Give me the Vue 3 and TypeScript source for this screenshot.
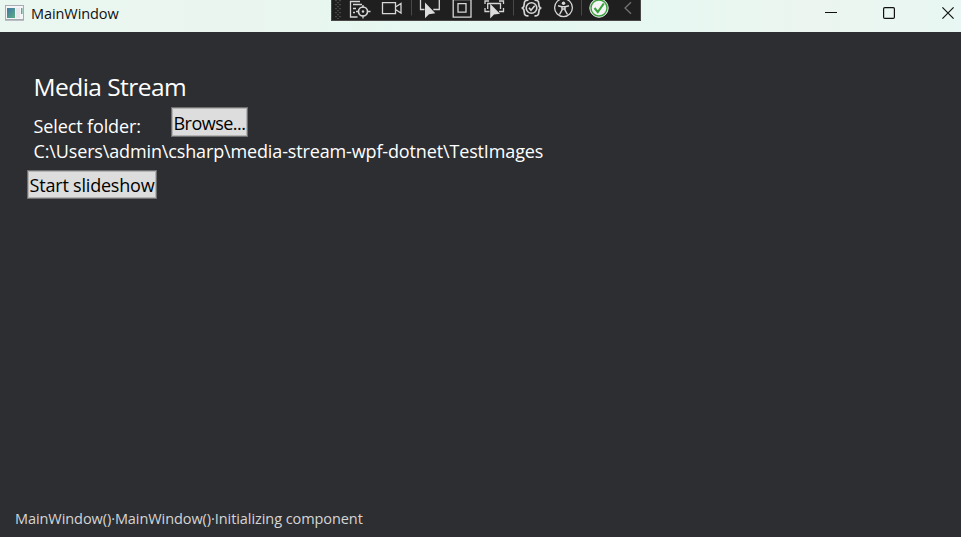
<script setup lang="ts">
import { ref } from 'vue'

const folder = ref<string>('C:\\Users\\admin\\csharp\\media-stream-wpf-dotnet\\TestImages')
const status = ref<string>('MainWindow()·MainWindow()·Initializing component')
</script>

<template>
  <div class="window">
    <header class="titlebar">
      <svg class="app-icon" width="19" height="16" viewBox="0 0 19 16">
        <defs>
          <linearGradient id="pane" x1="0" y1="0" x2="1" y2="1">
            <stop offset="0" stop-color="#3f76a5" />
            <stop offset="1" stop-color="#5fae83" />
          </linearGradient>
        </defs>
        <rect x=".5" y=".5" width="18" height="14" fill="#f5f5f7" stroke="#a9acb4" />
        <path d="M0 15.2h19" stroke="#a3a6ad" />
        <rect x="2" y="3" width="8" height="10" fill="url(#pane)" />
        <rect x="11" y="3" width="4" height="10" fill="#e7e8eb" />
        <rect x="16" y="3" width="1.5" height="6" fill="#62a69a" />
      </svg>
      <span class="caption">MainWindow</span>
      <div class="controls">
        <svg width="12" height="13" viewBox="0 0 12 13"><path d="M0 6.5h12" stroke="#111" /></svg>
        <svg width="12" height="13" viewBox="0 0 12 13"><rect x=".6" y="1.6" width="10.8" height="10.8" rx="1.2" fill="none" stroke="#111" stroke-width="1.2" /></svg>
        <svg class="close" width="12" height="13" viewBox="0 0 12 13"><path d="M.4 1.4l11.2 11.2M11.6 1.4L.4 12.6" stroke="#111" stroke-width="1.2" /></svg>
      </div>
    </header>

    <svg class="debug-bar" width="310" height="21" viewBox="0 0 310 21" fill="none" stroke="#d6d6d6" stroke-width="1.3">
      <rect width="310" height="21" fill="#1f1f1f" stroke="none" />
      <path d="M0 20.5h309.5V0M.5 20V0" stroke="#494747" stroke-width="1" />
      <g stroke="#606060" stroke-width="1.2" stroke-dasharray="1.2 2.8">
        <path d="M5 0v19M9 0v19" />
        <path d="M7 2v17" />
      </g>
      <!-- live visual tree -->
      <path d="M29 1.5h-9.5v15.5h7M22 4.5h9M22 8.500h3M22 12.500h2" />
      <circle cx="32" cy="11.500" r="4.500" stroke-width="1.600" />
      <circle cx="32" cy="11.500" r="1.200" fill="#d6d6d6" stroke="none" />
      <path d="M32 5v3M32 15v3.500M25 11.500h3M36 11.500h3.500" />
      <!-- camera -->
      <path d="M51.500 2.700h13v11h-13zM64.500 7l5.500-3.500v9.500l-5.500-3.500" />
      <path d="M80.500 0v15.500M182.500 0v15.500M250.500 0v15.500" stroke="#484848" stroke-width="1" />
      <!-- select element -->
      <path d="M89.500 0v9.500h4M108.300 0v9.500h-6" />
      <path d="M94 2.500v15.800l4-4.100 6.300-.9z" fill="#dcdcdc" stroke="none" />
      <!-- layout adorners -->
      <path d="M122.200 -.5h17.800v17.700h-17.800z" />
      <path d="M127 3.700h8v8.500h-8z" />
      <!-- track focus -->
      <path d="M154 4v-3h4M168 1h4.500v3M154 8v3.500h4.500M172.500 8v3.500h-4.500" />
      <path d="M156.700 9v-5.500h12.800v5.500" />
      <path d="M159.200 3.700v14.800l3.800-4.100 6-.7z" fill="#dcdcdc" stroke="none" />
      <!-- hot reload settings -->
      <circle cx="200.500" cy="8" r="5.300" stroke-width="1.600" />
      <path d="M198 7.700l2 2.500 3.700-4.500" stroke-width="1.600" />
      <path d="M197.500 .2c-3-.1-4.200.8-4.200 3.300 0 2-.2 3.500-1.800 4.500 1.600 1 1.800 2.500 1.800 4.500 0 2.500 1.200 3.400 4.200 3.300M203.500 .2c3-.1 4.200.8 4.200 3.300 0 2 .2 3.500 1.800 4.500-1.600 1-1.800 2.500-1.800 4.500 0 2.500-1.200 3.400-4.200 3.300" stroke-width="1.700" />
      <!-- accessibility -->
      <circle cx="232.500" cy="7.700" r="8.900" />
      <circle cx="232.500" cy="3.200" r="1.700" fill="#d6d6d6" stroke="none" />
      <path d="M227 5.800l3.700 1h3.600l3.700-1M231 7v3l-2.500 4.500M234 7v3l2.500 4.500M231 9h3" stroke-width="1.500" />
      <!-- status -->
      <circle cx="268" cy="8" r="9.200" fill="#f4f4f4" stroke="#eee" stroke-width="1" />
      <circle cx="268" cy="8" r="8" stroke="#38a13c" stroke-width="1.400" />
      <path d="M263.500 8l3.300 4 6-8.500" stroke="#38a13c" stroke-width="2.100" />
      <path d="M300 2.200l-6 5.800 6 5.800" stroke="#737373" />
    </svg>

    <main class="content">
      <h1>Media Stream</h1>
      <div class="row">
        <span class="label">Select folder:</span>
        <button class="browse" type="button"><span>Browse...</span></button>
      </div>
      <p class="path">{{ folder }}</p>
      <button class="start" type="button"><span>Start slideshow</span></button>
    </main>

    <footer class="status">{{ status }}</footer>
  </div>
</template>

<style>
body {
  margin: 0;
  overflow: hidden;
}
</style>

<style scoped>
.window {
  position: relative;
  display: flex;
  flex-direction: column;
  width: 961px;
  height: 537px;
  background: #2d2e32;
  color: #fff;
  font-family: "Open Sans", "Noto Sans", sans-serif;
  white-space: nowrap;
}
.titlebar {
  display: flex;
  box-sizing: border-box;
  height: 32px;
  padding: 5px 7px 0 5px;
  background: linear-gradient(90deg, #e9f7f0, #ebf5ef 24%, #e5f8f1 45%, #e7f8f2 68%, #ecf5ef 84%, #e8f7f3);
  color: #111;
}
.caption {
  margin-left: 7px;
  font-size: 14.5px;
  line-height: 18px;
  letter-spacing: -0.08px;
}
.controls {
  display: flex;
  gap: 46px;
  margin: 1px 0 0 auto;
}
.close {
  margin-left: 1px;
}
.debug-bar {
  position: absolute;
  top: 0;
  left: 331px;
}
.content {
  display: flex;
  flex: 1;
  flex-direction: column;
  align-items: flex-start;
  padding: 38px 0 0 33.5px;
}
h1 {
  margin: 0;
  font-size: 24.5px;
  font-weight: 400;
  line-height: 34px;
  letter-spacing: -0.55px;
}
.row {
  display: flex;
  height: 35px;
  padding-top: 3px;
  box-sizing: border-box;
}
.label {
  width: 137.5px;
  padding-top: 7px;
  font-size: 18px;
  line-height: 25px;
  letter-spacing: -0.12px;
}
.path {
  margin: 0;
  font-size: 18px;
  line-height: 25px;
  letter-spacing: -0.14px;
}
button {
  display: flex;
  align-items: center;
  justify-content: center;
  box-sizing: border-box;
  padding: 2px 0 0;
  border: 1px solid #707070;
  box-shadow: inset 0 0 0 1px #b5b5b5;
  border-radius: 0;
  background: #ddd;
  color: #000;
  font: 18px/25px "Open Sans", "Noto Sans", sans-serif;
}
.browse {
  width: 77px;
  height: 30px;
  letter-spacing: -0.5px;
}
.start {
  width: 130px;
  height: 29px;
  margin: 6px 0 0 -6.5px;
  letter-spacing: -0.2px;
}
.status {
  padding: 0 0 8px 15px;
  color: #d5d5d5;
  font-size: 14.5px;
  line-height: 20px;
  letter-spacing: -0.07px;
}
</style>
